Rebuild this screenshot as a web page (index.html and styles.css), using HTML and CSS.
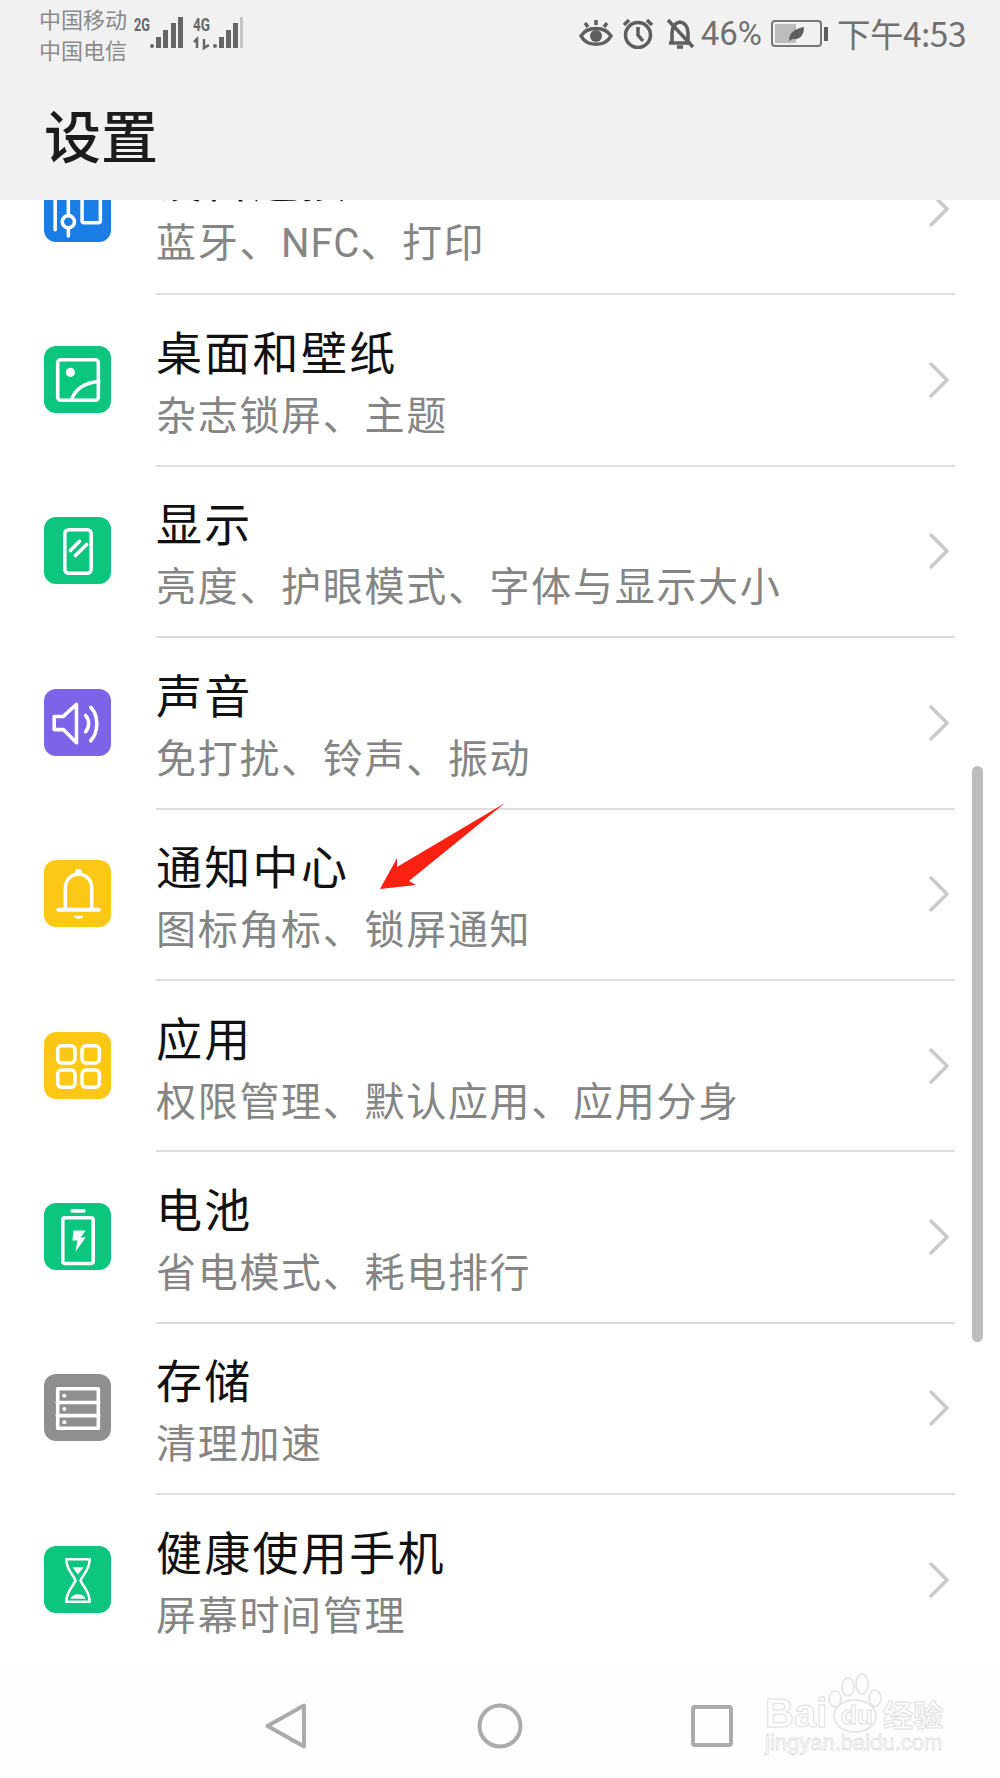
FILE: index.html
```html
<!DOCTYPE html>
<html lang="zh-CN">
<head>
<meta charset="utf-8">
<title>设置</title>
<link rel="stylesheet" href="styles.css">
</head>
<body>
<div class="screen">
  <header class="header">
    <div class="status">
      <div class="status-left">
        <div class="carriers"><span>中国移动</span><span>中国电信</span></div>
        <svg class="sig" viewBox="0 0 51 35"><text x="1" y="16" class="net" textLength="16" lengthAdjust="spacingAndGlyphs">2G</text><g class="bars"><circle cx="19" cy="31" r="2"/><rect x="23" y="22" width="5" height="11"/><rect x="30" y="15" width="5" height="18"/><rect x="38" y="8" width="5" height="25"/><rect x="45" y="2" width="5" height="31"/></g></svg>
        <svg class="sig sig2" viewBox="0 0 51 35"><text x="1" y="16" class="net" textLength="17" lengthAdjust="spacingAndGlyphs">4G</text><path class="arrows" d="M5 33V24L2 27M12 24V33L17 30"/><g class="bars"><circle cx="23" cy="31" r="2"/><rect x="27" y="22" width="5" height="11"/><rect x="34" y="15" width="5" height="18"/><rect x="41" y="8" width="5" height="25"/></g><rect class="bar-faint" x="48" y="2" width="3" height="31"/></svg>
      </div>
      <div class="status-right">
        <svg class="st eye" viewBox="0 0 34 30"><path d="M2 18C8 8 26 8 32 18C26 29 8 29 2 18Z" class="ln"/><circle cx="17" cy="18" r="6" class="fl"/><path d="M17 2V7M6 5L9 9M28 5L25 9" class="ln"/></svg>
        <svg class="st alarm" viewBox="0 0 32 31"><circle cx="16" cy="17" r="12.5" class="ln"/><path d="M16 9V17L21 23M2 7L7 2M30 7L25 2" class="ln"/></svg>
        <svg class="st belloff" viewBox="0 0 29 31"><path d="M3 25H25M6 25V15C6 9 9 5 14 4C19 5 22 9 22 15V25M2 2L27 29" class="ln"/><path d="M11 29H17" class="ln"/></svg>
        <span class="pct">46%</span>
        <svg class="st batt" viewBox="0 0 57 27"><rect x="1" y="1" width="49" height="25" rx="3" class="ln thin"/><rect x="4" y="4" width="21" height="19" class="lvl"/><path d="M18 21C18 12 24 9 33 7C33 15 29 20 22 19Z" class="fl"/><rect x="53" y="7" width="4" height="14" class="fl"/></svg>
        <span class="time">下午4:53</span>
      </div>
    </div>
    <h1 class="page-title">设置</h1>
  </header>

  <main class="content">
    <ul class="list">
      <li class="row">
        <span class="tile blue"><svg viewBox="0 0 66 66"><path d="M11 0V54M24 0V60" class="w"/><circle cx="24" cy="46" r="6" class="w bf"/><rect x="37.500" y="-10" width="18" height="57" rx="2" class="w"/></svg></span>
        <div class="body"><div class="text"><div class="t">设备连接</div><div class="s">蓝牙、<span class="latin">NFC</span>、打印</div></div><svg class="chev" viewBox="0 0 20 36"><path d="M2 2L18 18L2 34"/></svg></div>
      </li>
      <li class="row">
        <span class="tile green"><svg viewBox="0 0 66 66"><rect x="13.5" y="13.5" width="40" height="40" rx="3" class="w"/><circle cx="26" cy="26" r="4.5" class="wf"/><path d="M27 53C31 42 41 36 54 35" class="w"/></svg></span>
        <div class="body"><div class="text"><div class="t">桌面和壁纸</div><div class="s">杂志锁屏、主题</div></div><svg class="chev" viewBox="0 0 20 36"><path d="M2 2L18 18L2 34"/></svg></div>
      </li>
      <li class="row">
        <span class="tile green"><svg viewBox="0 0 66 66"><rect x="20.5" y="12.5" width="26" height="43" rx="4" class="w"/><path d="M26 33L35 24M31 38L42 27" class="w"/></svg></span>
        <div class="body"><div class="text"><div class="t">显示</div><div class="s">亮度、护眼模式、字体与显示大小</div></div><svg class="chev" viewBox="0 0 20 36"><path d="M2 2L18 18L2 34"/></svg></div>
      </li>
      <li class="row">
        <span class="tile purple"><svg viewBox="0 0 66 66"><path d="M32 15L19 27H10V40H19L32 53Z" class="w"/><path d="M41 26C45 30 45 38 41 42M46 18C54 26 54 42 46 51" class="w"/></svg></span>
        <div class="body"><div class="text"><div class="t">声音</div><div class="s">免打扰、铃声、振动</div></div><svg class="chev" viewBox="0 0 20 36"><path d="M2 2L18 18L2 34"/></svg></div>
      </li>
      <li class="row">
        <span class="tile yellow"><svg viewBox="0 0 66 66"><path d="M21 48V28C21 20 26 14 34 14C42 14 47 20 47 28V48" class="w"/><path d="M14 49H54" class="w w4"/><circle cx="34" cy="12" r="3.5" class="wf"/><path d="M29 55H39C38 59 30 59 29 55Z" class="wf"/></svg></span>
        <div class="body"><div class="text"><div class="t">通知中心</div><div class="s">图标角标、锁屏通知</div></div><svg class="chev" viewBox="0 0 20 36"><path d="M2 2L18 18L2 34"/></svg></div>
      </li>
      <li class="row">
        <span class="tile yellow"><svg viewBox="0 0 66 66"><rect x="13.5" y="13.5" width="17" height="17" rx="4" class="w"/><rect x="37.5" y="13.5" width="17" height="17" rx="4" class="w"/><rect x="13.5" y="37.5" width="17" height="17" rx="4" class="w"/><rect x="37.5" y="37.5" width="17" height="17" rx="4" class="w"/></svg></span>
        <div class="body"><div class="text"><div class="t">应用</div><div class="s">权限管理、默认应用、应用分身</div></div><svg class="chev" viewBox="0 0 20 36"><path d="M2 2L18 18L2 34"/></svg></div>
      </li>
      <li class="row">
        <span class="tile green"><svg viewBox="0 0 66 66"><rect x="26" y="6" width="15" height="3.5" rx="1.5" class="wf"/><rect x="18.5" y="14.5" width="30" height="45" rx="2" class="w"/><path d="M29 27H41L36 34H41L31 48L33 37H28Z" class="wf"/></svg></span>
        <div class="body"><div class="text"><div class="t">电池</div><div class="s">省电模式、耗电排行</div></div><svg class="chev" viewBox="0 0 20 36"><path d="M2 2L18 18L2 34"/></svg></div>
      </li>
      <li class="row">
        <span class="tile gray"><svg viewBox="0 0 66 66"><rect x="13.5" y="14.5" width="40" height="39" class="w"/><path d="M13 28H54M13 41H54" class="w"/><circle cx="20" cy="21.5" r="2" class="wf"/><circle cx="20" cy="34.5" r="2" class="wf"/><circle cx="20" cy="47.5" r="2" class="wf"/></svg></span>
        <div class="body"><div class="text"><div class="t">存储</div><div class="s">清理加速</div></div><svg class="chev" viewBox="0 0 20 36"><path d="M2 2L18 18L2 34"/></svg></div>
      </li>
      <li class="row">
        <span class="tile green"><svg viewBox="0 0 66 66"><path d="M22 13H45C45 24 38 28 36 34C38 40 45 44 45 55H22C22 44 29 40 31 34C29 28 22 24 22 13Z" class="w w25"/><path d="M28 21H39L33.500 28Z" class="wf"/><path d="M26 52C28 46 39 46 41 52Z" class="wf"/></svg></span>
        <div class="body"><div class="text"><div class="t">健康使用手机</div><div class="s">屏幕时间管理</div></div><svg class="chev" viewBox="0 0 20 36"><path d="M2 2L18 18L2 34"/></svg></div>
      </li>
    </ul>
  </main>

  <nav class="nav">
    <svg class="nav-i back" viewBox="0 0 42 46"><path d="M39 2.500V43.500L2.500 23Z"/></svg>
    <svg class="nav-i home" viewBox="0 0 46 46"><circle cx="23" cy="23" r="20.500"/></svg>
    <svg class="nav-i recent" viewBox="0 0 42 42"><rect x="2" y="2" width="38" height="38" rx="2"/></svg>
  </nav>

  <div class="scrollbar"></div>

  <svg class="arrow" viewBox="0 0 130 90"><polygon points="127,1 19,65 19,56 2,87 38,83 31,79"/></svg>

  <svg class="mark" viewBox="0 0 182 86">
    <g class="mark-paw"><ellipse cx="83" cy="15" rx="6" ry="9"/><ellipse cx="97" cy="12" rx="6" ry="10"/><ellipse cx="70" cy="27" rx="6" ry="8"/><ellipse cx="110" cy="26" rx="6" ry="8"/><ellipse cx="90" cy="44" rx="21" ry="16"/></g>
    <text x="0" y="55" class="mark-big">Bai</text>
    <text x="76" y="52" class="mark-du">du</text>
    <text x="118" y="54" class="mark-cn">经验</text>
    <text x="0" y="78" class="mark-url">jingyan.baidu.com</text>
  </svg>
</div>
</body>
</html>
```

FILE: styles.css
```css
* { box-sizing: border-box; }
html, body { margin: 0; padding: 0; }
body { font-family: "Noto Sans CJK SC", "Noto Sans", sans-serif; background: #fff; }

.screen {
  position: relative;
  width: 1000px;
  height: 1778px;
  overflow: hidden;
  display: flex;
  flex-direction: column;
  background: #fff;
}

/* Header */
.header {
  flex: none;
  height: 200px;
  background: #f1f1f1;
  position: relative;
  z-index: 2;
}
.status {
  display: flex;
  justify-content: space-between;
  align-items: flex-start;
  padding: 0 34px 0 39px;
  height: 64px;
}
.status-left { display: flex; align-items: flex-start; }
.carriers {
  display: flex;
  flex-direction: column;
  width: 94px;
  font-size: 22px;
  line-height: 31px;
  color: #8a8a8a;
  padding-top: 3px;
  white-space: nowrap;
}
.sig { width: 51px; height: 35px; margin-top: 15px; overflow: visible; }
.sig2 { margin-left: 8px; }
.net { font: 700 19px "Roboto", sans-serif; fill: #666; }
.bars { fill: #666; }
.bar-faint { fill: #c4c4c4; }
.arrows { fill: none; stroke: #666; stroke-width: 2.500; }

.status-right { display: flex; align-items: center; height: 66px; color: #707070; }
.st { display: block; flex: none; }
.eye { width: 34px; height: 30px; }
.alarm { width: 32px; height: 31px; margin-left: 9px; }
.belloff { width: 29px; height: 31px; margin-left: 12px; }
.batt { width: 57px; height: 27px; margin-left: 9px; }
.ln { fill: none; stroke: #5e5e5e; stroke-width: 3.500; }
.thin { stroke: #777; stroke-width: 2; }
.fl { fill: #5e5e5e; }
.lvl { fill: #bcbcbc; }
.pct { font: 400 33px/1 "Roboto", sans-serif; margin-left: 5.500px; }
.time { font-size: 33.500px; line-height: 1; margin-left: 9px; white-space: nowrap; font-family: "Noto Sans CJK SC", sans-serif; letter-spacing: -0.5px; }

.page-title {
  margin: 0;
  padding-left: 44px;
  font-size: 57px;
  font-weight: 500;
  line-height: 70px;
  color: #1c1c1c;
  margin-top: 34px;
}

/* List */
.content { flex: 1; min-height: 0; overflow: hidden; }
.list { list-style: none; margin: -76px 0 0; padding: 0; }
.row {
  display: flex;
  align-items: center;
  height: 171.400px;
  padding: 0 45px 0 44px;
  gap: 45px;
}
.tile {
  flex: none;
  width: 67px;
  height: 67px;
  margin-top: -3px;
  border-radius: 12px;
  overflow: hidden;
}
.tile svg { display: block; width: 67px; height: 67px; }
.blue { background: #1a7de6; }
.green { background: #0cc67f; }
.purple { background: #7c63e8; }
.yellow { background: #fdc716; }
.gray { background: #8f8f8f; }
.w { fill: none; stroke: #fff; stroke-width: 3.500; stroke-linejoin: round; stroke-linecap: round; }
.bf { fill: #1a7de6; }
.w4 { stroke-width: 4; }
.w25 { stroke-width: 2.500; }
.wf { fill: #fff; }

.body {
  flex: 1;
  align-self: stretch;
  display: flex;
  align-items: center;
  justify-content: space-between;
  padding-right: 6px;
  border-bottom: 2px solid #dddddd;
}
.text { padding-top: 4px; }
.t {
  font-size: 46px;
  line-height: 59px;
  letter-spacing: 2.300px;
  color: #111;
  white-space: nowrap;
}
.s {
  margin-top: 4px;
  font-size: 40px;
  line-height: 59px;
  letter-spacing: 1.700px;
  color: #858585;
  white-space: nowrap;
}
.latin { letter-spacing: 0.800px; font-family: "Roboto", sans-serif; }
.chev { width: 20px; height: 36px; flex: none; }
.chev path { fill: none; stroke: #cacaca; stroke-width: 3.500; stroke-linecap: round; stroke-linejoin: round; }

/* Navigation bar */
.nav {
  flex: none;
  height: 113px;
  background: #fefdfe;
  display: flex;
  align-items: center;
  padding: 9px 0 0 265px;
}
.nav-i { display: block; flex: none; fill: none; stroke: #ababab; stroke-width: 4; stroke-linejoin: round; }
.back { width: 42px; height: 46px; }
.home { width: 46px; height: 46px; margin-left: 170px; }
.recent { width: 42px; height: 42px; margin-left: 168px; }

/* Overlays */
.scrollbar {
  position: absolute;
  left: 972px;
  top: 766px;
  width: 11px;
  height: 576px;
  background: #bdbdbd;
  border-radius: 5.500px;
  z-index: 3;
}
.arrow {
  position: absolute;
  left: 378px;
  top: 802px;
  width: 130px;
  height: 90px;
  z-index: 3;
}
.arrow polygon { fill: #fb2112; }
.mark {
  position: absolute;
  left: 765px;
  top: 1672px;
  width: 182px;
  height: 86px;
  z-index: 3;
  overflow: visible;
}
.mark-paw ellipse { fill: none; stroke: #e2e2e2; stroke-width: 1.500; }
.mark-big, .mark-du, .mark-cn, .mark-url {
  fill: #fff;
  stroke: #dedede;
  stroke-width: 1;
  font-family: "Liberation Sans", sans-serif;
}
.mark-big { font-size: 40px; font-weight: 700; }
.mark-du { font-size: 26px; font-weight: 700; }
.mark-cn { font-size: 30px; font-family: "Noto Sans CJK SC", sans-serif; font-weight: 700; }
.mark-url { font-size: 22px; stroke-width: 0.800; }
```
